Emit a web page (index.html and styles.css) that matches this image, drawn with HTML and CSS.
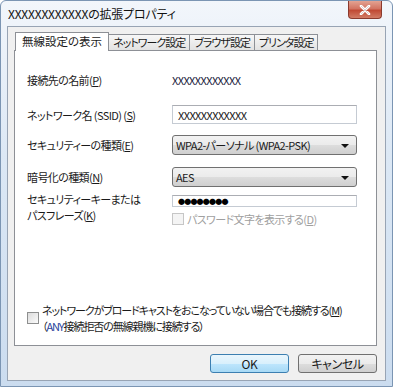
FILE: index.html
```html
<!DOCTYPE html>
<html lang="ja">
<head>
  <meta charset="UTF-8">
  <title>XXXXXXXXXXXXの拡張プロパティ</title>
  <link rel="stylesheet" href="styles.css">
</head>
<body>
  <div class="window">
    <div class="titlebar">
      <span class="title">XXXXXXXXXXXXの拡張プロパティ</span>
      <div class="close-btn">
        <svg width="12" height="10" viewBox="0 0 12 10">
          <path d="M2 1 L10 9 M10 1 L2 9" stroke="#fff" stroke-width="2.6" stroke-linecap="round"/>
          <path d="M2 1 L10 9 M10 1 L2 9" stroke="#6b3b3b" stroke-width="0.6" fill="none" opacity="0.4"/>
        </svg>
      </div>
    </div>

    <div class="client">
      <div class="tabs">
        <div class="tab active">無線設定の表示</div>
        <div class="tab">ネットワーク設定</div>
        <div class="tab">ブラウザ設定</div>
        <div class="tab">プリンタ設定</div>
      </div>

      <div class="panel">
        <div class="row row-name">
          <span class="label">接続先の名前(<u>P</u>)</span>
          <span class="value">XXXXXXXXXXXX</span>
        </div>
        <div class="row row-ssid">
          <span class="label">ネットワーク名 (SSID) (<u>S</u>)</span>
          <div class="field textbox">XXXXXXXXXXXX</div>
        </div>
        <div class="row row-sec">
          <span class="label">セキュリティーの種類(<u>E</u>)</span>
          <div class="field combo">WPA2-パーソナル (WPA2-PSK)<span class="arrow"></span></div>
        </div>
        <div class="row row-enc">
          <span class="label">暗号化の種類(<u>N</u>)</span>
          <div class="field combo">AES<span class="arrow"></span></div>
        </div>
        <div class="row row-key">
          <span class="label two-line">セキュリティーキーまたは<br>パスフレーズ(<u>K</u>)</span>
          <div class="key-col">
            <div class="field textbox dots">●●●●●●●●</div>
            <div class="check disabled">
              <span class="box"></span>
              <span>パスワード文字を表示する(<u>D</u>)</span>
            </div>
          </div>
        </div>

        <div class="spacer"></div>

        <div class="check bottom-check">
          <span class="box"></span>
          <span class="bottom-text">ネットワークがブロードキャストをおこなっていない場合でも接続する(<u>M</u>)<br>（<span class="any">ANY</span>接続拒否の無線親機に接続する）</span>
        </div>
      </div>

      <div class="buttons">
        <div class="btn btn-default">OK</div>
        <div class="btn">キャンセル</div>
      </div>
    </div>
  </div>
</body>
</html>
```

FILE: styles.css
```css
* { margin: 0; padding: 0; box-sizing: border-box; }
html, body {
  width: 393px;
  height: 387px;
  overflow: hidden;
  font-family: "Noto Sans CJK JP", "Noto Sans", sans-serif;
  font-size: 11px;
  font-feature-settings: "palt";
  letter-spacing: -0.6px;
  color: #1a1a1a;
  background: #ffffff;
}
.window {
  height: 387px;
  display: flex;
  flex-direction: column;
  border: 1px solid #7b95b3;
  border-radius: 6px 6px 0 0;
  background: linear-gradient(to bottom, #f2f6fb 0%, #dce8f5 40%, #cbdcef 100%);
  padding: 0 6px 5px 6px;
}
.titlebar {
  height: 25px;
  display: flex;
  align-items: flex-start;
}
.title {
  font-size: 12px;
  line-height: 12px;
  letter-spacing: -0.2px;
  margin-top: 7px;
  margin-left: 1px;
  color: #111;
}
.close-btn {
  margin-left: auto;
  margin-right: 4px;
  width: 34px;
  height: 18px;
  border: 1px solid #8a3a2e;
  border-top: none;
  border-radius: 0 0 4px 4px;
  background: linear-gradient(to bottom, #e3a392 0%, #d27462 45%, #c04a35 55%, #d27c66 100%);
  display: flex;
  align-items: center;
  justify-content: center;
}
.client {
  flex: 1;
  display: flex;
  flex-direction: column;
  background: #f0f0f0;
  border: 1px solid #98a4b4;
  padding: 5px 8px 7px 6px;
}
.tabs {
  display: flex;
  align-items: flex-end;
  height: 18px;
  padding-left: 1px;
  position: relative;
  z-index: 1;
}
.tab {
  height: 16px;
  line-height: 14px;
  padding: 0 4px;
  border: 1px solid #8d9096;
  border-bottom: none;
  border-left: none;
  background: linear-gradient(to bottom, #f7f7f7, #e2e2e2);
  white-space: nowrap;
  letter-spacing: -1px;
}
.tab.active {
  height: 19px;
  line-height: 16px;
  padding: 0 6px;
  border-left: 1px solid #8d9096;
  background: #ffffff;
  margin-bottom: -1px;
  font-size: 11.5px;
  letter-spacing: 0;
}
.panel {
  flex: 1;
  background: #ffffff;
  border: 1px solid #8d9096;
  display: flex;
  flex-direction: column;
  padding: 23px 19px 11px 12px;
}
.row {
  display: flex;
  align-items: center;
}
.label {
  flex: 0 0 145px;
  white-space: nowrap;
}
.row-name { height: 12px; }
.row-ssid { margin-top: 19px; }
.row-sec { margin-top: 11px; }
.row-enc { margin-top: 12px; }
.row-key { margin-top: 8px; align-items: flex-start; }
.two-line { line-height: 16px; margin-top: -4px; }
.value {
  color: #1c2440;
}
.field {
  flex: 1;
  height: 19px;
  display: flex;
  align-items: center;
  padding: 0 5px;
  white-space: nowrap;
}
.textbox {
  border: 1px solid #c5cbd3;
  border-top-color: #abadb3;
  background: #ffffff;
}
.combo {
  height: 20px;
  border: 1px solid #707070;
  border-radius: 3px;
  background: linear-gradient(to bottom, #f2f2f2 0%, #ebebeb 50%, #dddddd 51%, #cfcfcf 100%);
  position: relative;
  padding-left: 3px;
}
.arrow {
  position: absolute;
  right: 7px;
  top: 8px;
  border-left: 4px solid transparent;
  border-right: 4px solid transparent;
  border-top: 4px solid #111;
}
.key-col {
  flex: 1;
  display: flex;
  flex-direction: column;
}
.dots {
  font-size: 7px;
  letter-spacing: -0.8px;
  color: #000;
}
.check {
  display: flex;
  align-items: center;
  gap: 3px;
}
.check .box {
  width: 12px;
  height: 12px;
  flex: 0 0 12px;
  border: 1px solid #8e8f8f;
  background: linear-gradient(to bottom right, #dcdcdc, #fbfbfb);
}
.check.disabled {
  margin-top: 4px;
  color: #a0a0a0;
}
.check.disabled .box {
  border-color: #c6c6c6;
  background: #f4f4f4;
}
.spacer { flex: 1; }
.bottom-check {
  align-items: flex-start;
}
.bottom-check .box {
  margin-top: 10px;
}
.bottom-text {
  white-space: nowrap;
  line-height: 16px;
  letter-spacing: -1.1px;
}
.any {
  color: #1f3f9a;
}
.buttons {
  display: flex;
  justify-content: flex-end;
  gap: 9px;
  padding-top: 8px;
}
.btn {
  width: 79px;
  height: 19px;
  border: 1px solid #707070;
  border-radius: 3px;
  background: linear-gradient(to bottom, #f2f2f2 0%, #ebebeb 50%, #dddddd 51%, #cfcfcf 100%);
  display: flex;
  align-items: center;
  justify-content: center;
  font-size: 12px;
  letter-spacing: -0.4px;
}
.btn-default {
  border-color: #3c7fb1;
  background: linear-gradient(to bottom, #eaf6fd 0%, #d9f0fc 50%, #bee6fd 51%, #a7d9f5 100%);
}
```
